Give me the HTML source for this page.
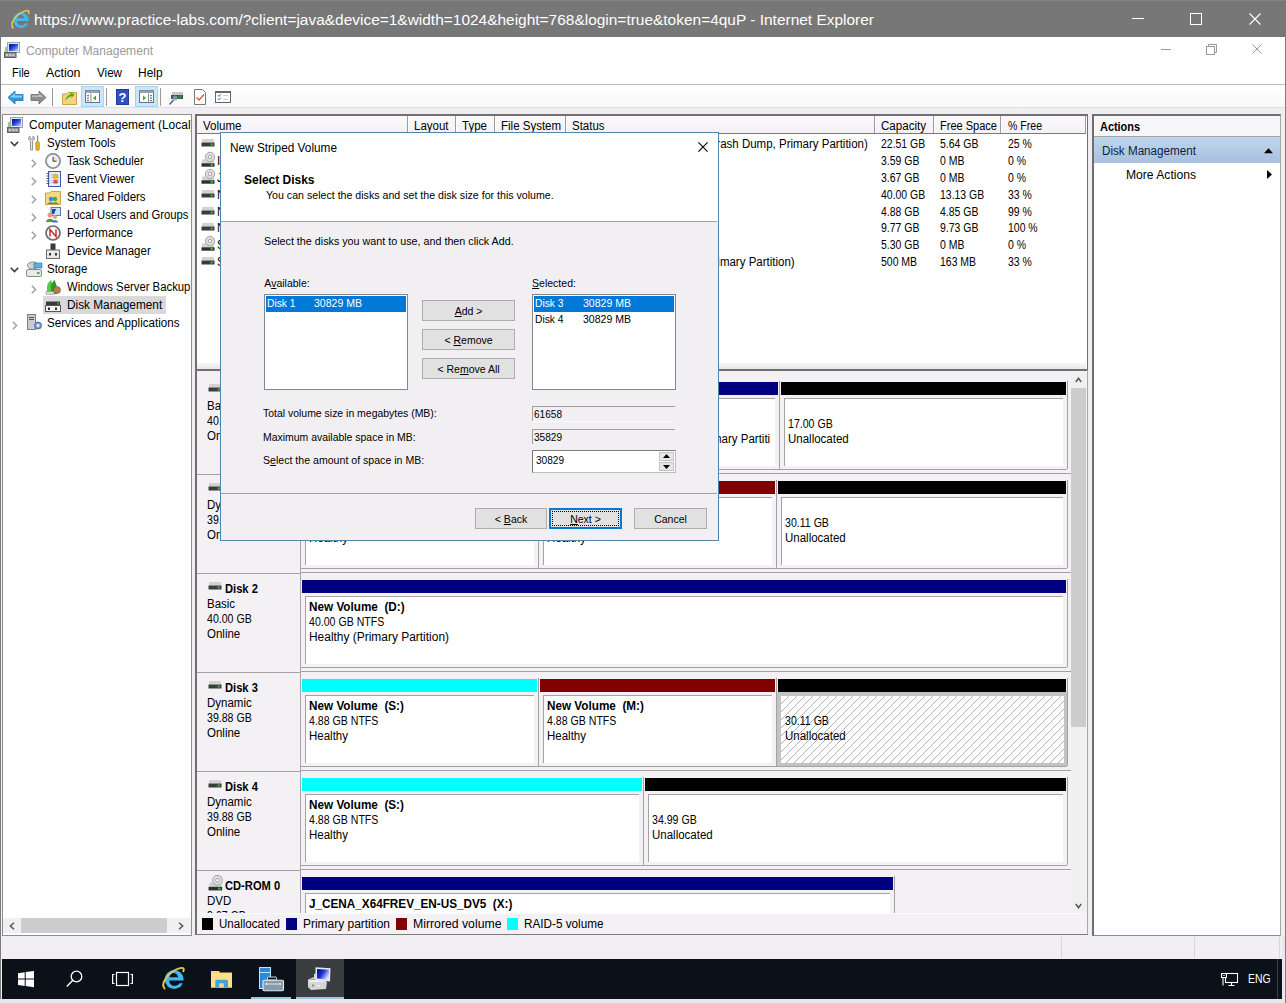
<!DOCTYPE html>
<html><head><meta charset="utf-8">
<style>
*{box-sizing:border-box}
html,body{margin:0;padding:0}
body{width:1286px;height:1003px;overflow:hidden;position:relative;background:#f0eef2;font-family:"Liberation Sans",sans-serif;color:#000}
.a{position:absolute}
.t{position:absolute;white-space:pre;line-height:1;font-size:11.5px;transform-origin:0 0}
svg{position:absolute;overflow:visible}
.u{text-decoration:underline}
</style></head><body>

<div class="a" style="left:0px;top:0px;width:1286px;height:1003px;background:#f1eef2;"></div>
<div class="a" style="left:0px;top:0px;width:1px;height:1003px;background:#7d7d7d;"></div>
<div class="a" style="left:0px;top:0px;width:1286px;height:37px;background:#777777;"></div>
<div class="a" style="left:0px;top:0px;width:1286px;height:1px;background:#858585;"></div>
<svg style="left:10px;top:9px" width="20" height="20" viewBox="0 0 20 20"><g transform="scale(0.8333333333333334)">
<circle cx="13.2" cy="13.5" r="9.4" fill="#42b6ee"/>
<path d="M8.4 11.2 C9 8.4 11 7 12.8 7 C14.6 7 16.6 8.4 17.1 11.2 Z" fill="#767676"/>
<path d="M8.1 14.4 H24 V17.2 H18.6 C17.4 19.2 15.2 19.7 13 19.7 C10.4 19.7 8.4 17.6 8.1 14.4 Z" fill="#767676"/>
<path d="M3.6 22.6 C-0.5 18.5 6 6.5 17.5 2.6 C21.5 1.2 23.8 1.8 22.3 5.3" fill="none" stroke="#e9c54a" stroke-width="1.9" stroke-linecap="round"/>
</g></svg>
<div class="t " style="left:34px;top:12px;font-size:15.4px;color:#fff;transform:scaleX(1.0042);">https://www.practice-labs.com/?client=java&amp;device=1&amp;width=1024&amp;height=768&amp;login=true&amp;token=4quP - Internet Explorer</div>
<div class="a" style="left:1132px;top:18px;width:12px;height:1px;background:#fff;"></div>
<div class="a" style="left:1190px;top:13px;width:12px;height:12px;background:transparent;border:1px solid #fff"></div>
<svg style="left:1249px;top:13px" width="12" height="12" viewBox="0 0 12 12"><path d="M0.5 0.5 L11.5 11.5 M11.5 0.5 L0.5 11.5" stroke="#fff" stroke-width="1.1"/></svg>
<div class="a" style="left:1px;top:37px;width:1284px;height:47px;background:#fff;"></div>
<svg style="left:4px;top:42px" width="16" height="16" viewBox="0 0 16 16"><defs><linearGradient id="scr" x1="0" y1="0" x2="1" y2="1"><stop offset="0" stop-color="#00107a"/><stop offset="0.45" stop-color="#2040d8"/><stop offset="1" stop-color="#c8d4ff"/></linearGradient></defs>
<rect x="3.5" y="0.5" width="12" height="10" fill="#dfe6f2" stroke="#9aa4b4" stroke-width="1"/>
<rect x="5" y="2" width="9" height="7" fill="url(#scr)"/>
<rect x="0.5" y="10.5" width="11.5" height="5" fill="#8c9298" stroke="#5d6268" stroke-width="1"/>
<rect x="2" y="12.3" width="2" height="1.5" fill="#e6e6e6"/><rect x="5.2" y="12.3" width="2" height="1.5" fill="#e6e6e6"/><rect x="8.4" y="12.3" width="2" height="1.5" fill="#e6e6e6"/>
<rect x="0.8" y="5" width="2.5" height="5" fill="#a8c090"/></svg>
<div class="t " style="left:25.5px;top:45px;font-size:12px;color:#9a9a9a;transform:scaleX(1.0073);">Computer Management</div>
<div class="a" style="left:1161px;top:49px;width:10px;height:1px;background:#9a9a9a;"></div>
<svg style="left:1206px;top:44px" width="11" height="11" viewBox="0 0 11 11"><rect x="0.5" y="2.5" width="8" height="8" fill="none" stroke="#9a9a9a"/><path d="M2.5 2.5 V0.5 H10.5 V8.5 H8.5" fill="none" stroke="#9a9a9a"/></svg>
<svg style="left:1252px;top:44px" width="10" height="10" viewBox="0 0 10 10"><path d="M0.5 0.5 L9.5 9.5 M9.5 0.5 L0.5 9.5" stroke="#9a9a9a" stroke-width="1"/></svg>
<div class="t " style="left:12.3px;top:67px;font-size:12px;transform:scaleX(0.9150);">File</div>
<div class="t " style="left:46px;top:67px;font-size:12px;transform:scaleX(1.0342);">Action</div>
<div class="t " style="left:97px;top:67px;font-size:12px;transform:scaleX(0.9691);">View</div>
<div class="t " style="left:138px;top:67px;font-size:12px;transform:scaleX(0.9965);">Help</div>
<div class="a" style="left:1px;top:84px;width:1284px;height:1px;background:#bdbdbd;"></div>
<div class="a" style="left:1px;top:85px;width:1284px;height:22px;background:linear-gradient(#ffffff,#f8f8f9);"></div>
<div class="a" style="left:1px;top:107px;width:1284px;height:1px;background:#e2e0e3;"></div>
<svg style="left:7px;top:90px" width="17" height="15" viewBox="0 0 17 15"><path d="M1 7.5 L8 1 L8 4.5 L16 4.5 L16 10.5 L8 10.5 L8 14 Z" fill="#2a9be0" stroke="#1d6fb0" stroke-width="0.8"/><path d="M3 7.5 L8 3 L8 5.5 L15 5.5 L15 7.5Z" fill="#7fd0f8"/></svg>
<svg style="left:30px;top:90px" width="17" height="15" viewBox="0 0 17 15"><path d="M16 7.5 L9 1 L9 4.5 L1 4.5 L1 10.5 L9 10.5 L9 14 Z" fill="#8e8e8e" stroke="#6a6a6a" stroke-width="0.8"/><path d="M2 5.5 L9 5.5 L9 3 L13 7 L2 7Z" fill="#bdbdbd"/></svg>
<div class="a" style="left:52px;top:88px;width:1px;height:18px;background:#9a9a9a;"></div>
<svg style="left:62px;top:89px" width="15" height="16" viewBox="0 0 15 16"><path d="M0.5 5 L5 5 L6 3.5 L14.5 3.5 L14.5 15.5 L0.5 15.5Z" fill="#f4d57c" stroke="#c9a444"/><path d="M3 12 C4 8 6 6 9 5 L8 3 L12.5 5.5 L9.5 9 L9.5 7 C7 8 5 9.5 3 12Z" fill="#4aa82a"/></svg>
<div class="a" style="left:81px;top:86px;width:23px;height:21px;background:#cde6f7;border:1px solid #a8d2f0"></div>
<svg style="left:85px;top:90px" width="15" height="13" viewBox="0 0 15 13"><rect x="0.5" y="0.5" width="14" height="12" fill="#fff" stroke="#6b7480"/><rect x="0.5" y="0.5" width="14" height="2.5" fill="#9aa3ad"/><rect x="2" y="5" width="2" height="1.2" fill="#6b7480"/><rect x="2" y="7.5" width="2" height="1.2" fill="#6b7480"/><rect x="2" y="10" width="2" height="1.2" fill="#6b7480"/><rect x="5.5" y="3.5" width="0.8" height="9" fill="#6b7480"/><path d="M11 5.5 L8 8 L11 10.5Z" fill="#3aa83a"/></svg>
<div class="a" style="left:106px;top:88px;width:1px;height:18px;background:#9a9a9a;"></div>
<svg style="left:116px;top:89px" width="13" height="16" viewBox="0 0 13 16"><rect x="0" y="0" width="13" height="16" fill="#1e3f9a"/><rect x="1" y="1" width="11" height="14" fill="#2c52c0"/><text x="6.5" y="13" font-family="Liberation Sans" font-weight="bold" font-size="13" fill="#fff" text-anchor="middle">?</text></svg>
<div class="a" style="left:135px;top:86px;width:23px;height:21px;background:#cde6f7;border:1px solid #a8d2f0"></div>
<svg style="left:139px;top:90px" width="15" height="13" viewBox="0 0 15 13"><rect x="0.5" y="0.5" width="14" height="12" fill="#fff" stroke="#6b7480"/><rect x="0.5" y="0.5" width="14" height="2.5" fill="#9aa3ad"/><rect x="11" y="5" width="2" height="1.2" fill="#6b7480"/><rect x="11" y="7.5" width="2" height="1.2" fill="#6b7480"/><rect x="11" y="10" width="2" height="1.2" fill="#6b7480"/><rect x="9" y="3.5" width="0.8" height="9" fill="#6b7480"/><path d="M4 5.5 L7 8 L4 10.5Z" fill="#3aa83a"/></svg>
<div class="a" style="left:160px;top:88px;width:1px;height:18px;background:#9a9a9a;"></div>
<svg style="left:169px;top:91px" width="15" height="14" viewBox="0 0 15 14"><rect x="3" y="1" width="11" height="3" fill="#c8c8c8"/><rect x="2" y="4" width="12" height="4" fill="#3a4a58"/><rect x="9" y="4.5" width="4" height="3" fill="#2a8a3a"/><circle cx="6" cy="7" r="2.5" fill="#8aa0c0" opacity="0.8"/><path d="M4.5 9 L0.5 13.5" stroke="#555" stroke-width="1.2"/></svg>
<svg style="left:194px;top:89px" width="12" height="16" viewBox="0 0 12 16"><path d="M0.5 0.5 L8.5 0.5 L11.5 3.5 L11.5 15.5 L0.5 15.5Z" fill="#fff" stroke="#777"/><path d="M2.5 8.5 L5 11 L10 5.5" fill="none" stroke="#e05a30" stroke-width="1.4"/></svg>
<svg style="left:215px;top:91px" width="16" height="12" viewBox="0 0 16 12"><rect x="0.5" y="0.5" width="15" height="11" fill="#fff" stroke="#666"/><rect x="0.5" y="0.5" width="15" height="1.5" fill="#666"/><path d="M3 4 L4 5.5 L6 3 M3 7.5 L4 9 L6 6.5" fill="none" stroke="#3a8ad0" stroke-width="1"/><rect x="8" y="4.3" width="5" height="0.8" fill="#bbb"/><rect x="8" y="7.8" width="5" height="0.8" fill="#bbb"/></svg>
<div class="a" style="left:2px;top:114px;width:190px;height:822px;background:#fff;border:1px solid #8e8e8e"></div>
<div class="a" style="left:195px;top:114px;width:893px;height:257px;background:#fff;border:2px solid #6f6f6f;border-right-width:1px;border-bottom:0"></div>
<div class="a" style="left:195px;top:369px;width:893px;height:566px;background:#f3f1f4;border:2px solid #6f6f6f;border-right:1px solid #a8a8a8;border-bottom:1px solid #7c7c7c"></div>
<div class="a" style="left:1092px;top:114px;width:189px;height:822px;background:#fff;border:2px solid #6f6f6f;border-right:1px solid #a8a8a8;border-bottom:1px solid #8e8e8e"></div>
<svg style="left:7px;top:117px" width="16" height="16" viewBox="0 0 16 16"><defs><linearGradient id="scr" x1="0" y1="0" x2="1" y2="1"><stop offset="0" stop-color="#00107a"/><stop offset="0.45" stop-color="#2040d8"/><stop offset="1" stop-color="#c8d4ff"/></linearGradient></defs>
<rect x="3.5" y="0.5" width="12" height="10" fill="#dfe6f2" stroke="#9aa4b4" stroke-width="1"/>
<rect x="5" y="2" width="9" height="7" fill="url(#scr)"/>
<rect x="0.5" y="10.5" width="11.5" height="5" fill="#8c9298" stroke="#5d6268" stroke-width="1"/>
<rect x="2" y="12.3" width="2" height="1.5" fill="#e6e6e6"/><rect x="5.2" y="12.3" width="2" height="1.5" fill="#e6e6e6"/><rect x="8.4" y="12.3" width="2" height="1.5" fill="#e6e6e6"/>
<rect x="0.8" y="5" width="2.5" height="5" fill="#a8c090"/></svg>
<div class="a" style="left:0;top:115px;width:190.5px;height:20px;overflow:hidden">
<div class="t " style="left:28.6px;top:4px;font-size:12px;transform:scaleX(0.9967);">Computer Management (Local)</div>
</div>
<svg style="left:10px;top:141px" width="9" height="6" viewBox="0 0 9 6"><path d="M0.8 0.8 L4.5 4.6 L8.2 0.8" fill="none" stroke="#3c3c3c" stroke-width="1.6"/></svg>
<svg style="left:28px;top:135px" width="13" height="16" viewBox="0 0 13 16"><path d="M2 1 C0 2 0 5 2.5 6 L2.5 15 L4.5 15 L4.5 6 C7 5 7 2 5 1 L5 4 L2 4Z" fill="#e8e8e8" stroke="#8a8a8a" stroke-width="0.9"/><rect x="9" y="0.5" width="1.2" height="6" fill="#888"/><rect x="7.8" y="6.5" width="3.6" height="9" rx="1.5" fill="#e8b020" stroke="#b88000" stroke-width="0.6"/></svg>
<div class="t " style="left:47.4px;top:137px;font-size:12px;transform:scaleX(0.9615);">System Tools</div>
<svg style="left:31px;top:159px" width="6" height="9" viewBox="0 0 6 9"><path d="M0.8 0.8 L4.6 4.5 L0.8 8.2" fill="none" stroke="#a0a0a0" stroke-width="1.5"/></svg>
<div class="t " style="left:66.5px;top:155px;font-size:12px;transform:scaleX(0.9361);">Task Scheduler</div>
<svg style="left:31px;top:177px" width="6" height="9" viewBox="0 0 6 9"><path d="M0.8 0.8 L4.6 4.5 L0.8 8.2" fill="none" stroke="#a0a0a0" stroke-width="1.5"/></svg>
<div class="t " style="left:66.5px;top:173px;font-size:12px;transform:scaleX(0.9583);">Event Viewer</div>
<svg style="left:31px;top:195px" width="6" height="9" viewBox="0 0 6 9"><path d="M0.8 0.8 L4.6 4.5 L0.8 8.2" fill="none" stroke="#a0a0a0" stroke-width="1.5"/></svg>
<div class="t " style="left:66.5px;top:191px;font-size:12px;transform:scaleX(0.9583);">Shared Folders</div>
<svg style="left:31px;top:213px" width="6" height="9" viewBox="0 0 6 9"><path d="M0.8 0.8 L4.6 4.5 L0.8 8.2" fill="none" stroke="#a0a0a0" stroke-width="1.5"/></svg>
<div class="t " style="left:66.5px;top:209px;font-size:12px;transform:scaleX(0.9389);">Local Users and Groups</div>
<svg style="left:31px;top:231px" width="6" height="9" viewBox="0 0 6 9"><path d="M0.8 0.8 L4.6 4.5 L0.8 8.2" fill="none" stroke="#a0a0a0" stroke-width="1.5"/></svg>
<div class="t " style="left:66.5px;top:227px;font-size:12px;transform:scaleX(0.9583);">Performance</div>
<div class="t " style="left:66.5px;top:245px;font-size:12px;transform:scaleX(0.9584);">Device Manager</div>
<svg style="left:45px;top:153px" width="16" height="16" viewBox="0 0 16 16"><circle cx="8" cy="8" r="7.2" fill="#e2e8f0" stroke="#7e8896" stroke-width="1.5"/><circle cx="8" cy="8" r="5.3" fill="#fbfbfd"/><path d="M8 8 L12.5 8 A4.5 4.5 0 0 0 8 3.5Z" fill="#f3dfb0"/><path d="M8 3.8 L8 8.2 L11.5 8.2" fill="none" stroke="#3a3a3a" stroke-width="1"/></svg>
<svg style="left:46px;top:171px" width="15" height="16" viewBox="0 0 15 16"><rect x="2.5" y="0.5" width="12" height="15" fill="#e8eef8" stroke="#3a5aa8"/><path d="M0.5 2.5h3M0.5 5h3M0.5 7.5h3M0.5 10h3M0.5 12.5h3" stroke="#3a5aa8" stroke-width="1"/><path d="M5 4h8M5 6.5h8M5 9h8M5 11.5h8" stroke="#9aaccc" stroke-width="0.7"/><circle cx="9.5" cy="5.5" r="2.3" fill="#f0c020" stroke="#b08a10" stroke-width="0.5"/><rect x="7.5" y="9" width="4" height="3.5" fill="#e04848"/></svg>
<svg style="left:45px;top:190px" width="16" height="15" viewBox="0 0 16 15"><path d="M0.5 3 L5 3 L6 1.5 L15.5 1.5 L15.5 14.5 L0.5 14.5Z" fill="#f4d88a" stroke="#c9a444"/><circle cx="6" cy="9" r="2.2" fill="#3a8ad0"/><circle cx="10" cy="9" r="2.2" fill="#4aa84a"/><path d="M2.5 14 C3 11.5 9 11.5 9.5 14Z" fill="#3a8ad0"/><path d="M7 14 C7.5 11.5 13 11.5 13.5 14Z" fill="#4aa84a"/></svg>
<svg style="left:45px;top:207px" width="16" height="16" viewBox="0 0 16 16"><rect x="6" y="0.5" width="9.5" height="8" fill="#cfe0f5" stroke="#5a7ab0"/><path d="M7 2 L11 2 L9 7 L7 7Z" fill="#1d3fb8"/><circle cx="5" cy="8" r="2.5" fill="#e0a070"/><path d="M1 15 C1 10.5 9 10.5 9 15Z" fill="#4a9a4a"/><circle cx="10" cy="10" r="2" fill="#e0a070"/><path d="M7 15.5 C7 12 13 12 13 15.5Z" fill="#3a7ad0"/></svg>
<svg style="left:45px;top:225px" width="16" height="16" viewBox="0 0 16 16"><circle cx="8" cy="8" r="7" fill="#f4f4f4" stroke="#6e6e6e" stroke-width="1.7"/><circle cx="8" cy="8" r="5" fill="#fff"/><path d="M5 11.5 L5 4.5 L11 11.5 L11 4.5" fill="none" stroke="#d02828" stroke-width="1.5"/></svg>
<svg style="left:46px;top:243px" width="14" height="16" viewBox="0 0 14 16"><rect x="4.5" y="0.5" width="5" height="6.5" fill="#3a3a3a"/><rect x="0.5" y="7" width="13" height="8.5" fill="#e8e8e8" stroke="#6a6a6a"/><rect x="3" y="10" width="2" height="2.5" fill="#333"/><rect x="9" y="10" width="2" height="2.5" fill="#333"/></svg>
<svg style="left:10px;top:267px" width="9" height="6" viewBox="0 0 9 6"><path d="M0.8 0.8 L4.5 4.6 L8.2 0.8" fill="none" stroke="#3c3c3c" stroke-width="1.6"/></svg>
<svg style="left:26px;top:261px" width="16" height="16" viewBox="0 0 16 16"><ellipse cx="7" cy="4.5" rx="5.5" ry="3.5" fill="#d8d8d8" stroke="#8a8a8a"/><circle cx="7" cy="4.5" r="1.2" fill="#fff" stroke="#888" stroke-width="0.5"/><rect x="8" y="2" width="8" height="5" fill="#5ab0e0" stroke="#2a7ab0" stroke-width="0.6"/><rect x="0.5" y="8.5" width="15" height="7" rx="1.5" fill="#e8e8e8" stroke="#8a8a8a"/><rect x="11" y="11" width="2.5" height="2" fill="#4aa84a"/></svg>
<div class="t " style="left:47.4px;top:263px;font-size:12px;transform:scaleX(0.9583);">Storage</div>
<svg style="left:31px;top:285px" width="6" height="9" viewBox="0 0 6 9"><path d="M0.8 0.8 L4.6 4.5 L0.8 8.2" fill="none" stroke="#a0a0a0" stroke-width="1.5"/></svg>
<svg style="left:45px;top:279px" width="16" height="16" viewBox="0 0 16 16"><path d="M2 15 L2 9 C2 4 5 2 6 1 C6.5 4 9 6 9 9 L9 15Z" fill="#5ac83a"/><path d="M6 15 L6 8 C6 5 8 2 10 1 C10 4 12 6 12 9 L12 15Z" fill="#2a9a2a"/><circle cx="12" cy="11" r="3.5" fill="#b08050" stroke="#7a5030" stroke-width="0.6"/><rect x="1" y="12.5" width="8" height="3" fill="#d8d8d8" stroke="#888" stroke-width="0.5"/></svg>
<div class="a" style="left:0;top:280px;width:190.5px;height:20px;overflow:hidden">
<div class="t " style="left:66.5px;top:1px;font-size:12px;transform:scaleX(0.9440);">Windows Server Backup</div>
</div>
<div class="a" style="left:43px;top:296px;width:123px;height:18px;background:#d9d9d9;"></div>
<svg style="left:45px;top:301px" width="16" height="11" viewBox="0 0 16 11"><rect x="1" y="0.5" width="14" height="4" fill="#3a3a3a"/><rect x="12" y="1.5" width="2" height="2" fill="#2ea02e"/><rect x="0.5" y="4.5" width="15" height="6" fill="#f4f4f4" stroke="#555"/><rect x="3" y="6.5" width="2" height="2.5" fill="#333"/><rect x="10" y="6.5" width="2" height="2.5" fill="#333"/></svg>
<div class="t " style="left:66.5px;top:299px;font-size:12px;transform:scaleX(0.9843);">Disk Management</div>
<svg style="left:12px;top:321px" width="6" height="9" viewBox="0 0 6 9"><path d="M0.8 0.8 L4.6 4.5 L0.8 8.2" fill="none" stroke="#a0a0a0" stroke-width="1.5"/></svg>
<svg style="left:27px;top:314px" width="15" height="16" viewBox="0 0 15 16"><rect x="0.5" y="0.5" width="8" height="15" fill="#c8ccd2" stroke="#7a7e86"/><rect x="2" y="3" width="5" height="1" fill="#555"/><rect x="2" y="5" width="5" height="1" fill="#555"/><circle cx="11" cy="11.5" r="3.5" fill="#7aa0d0" stroke="#4a70a0"/><circle cx="11" cy="11.5" r="1.3" fill="#fff"/></svg>
<div class="t " style="left:47.4px;top:317px;font-size:12px;transform:scaleX(0.9697);">Services and Applications</div>
<div class="a" style="left:3px;top:918px;width:188px;height:15px;background:#f0f0f0;"></div>
<div class="a" style="left:21px;top:918px;width:146px;height:15px;background:#cdcdcd;"></div>
<svg style="left:9px;top:922px" width="6" height="8" viewBox="0 0 6 8"><path d="M5 0.8 L1.3 4 L5 7.2" fill="none" stroke="#555" stroke-width="1.5"/></svg>
<svg style="left:178px;top:922px" width="6" height="8" viewBox="0 0 6 8"><path d="M1 0.8 L4.7 4 L1 7.2" fill="none" stroke="#555" stroke-width="1.5"/></svg>
<div class="a" style="left:197px;top:116px;width:889px;height:18px;background:linear-gradient(#fbfafb,#f3f1f4);"></div>
<div class="a" style="left:197px;top:133px;width:889px;height:1px;background:#7a7a7a;"></div>
<div class="a" style="left:407px;top:116px;width:1px;height:17px;background:#9c9c9c;"></div>
<div class="a" style="left:408px;top:116px;width:1px;height:17px;background:#fff;"></div>
<div class="a" style="left:455px;top:116px;width:1px;height:17px;background:#9c9c9c;"></div>
<div class="a" style="left:456px;top:116px;width:1px;height:17px;background:#fff;"></div>
<div class="a" style="left:494px;top:116px;width:1px;height:17px;background:#9c9c9c;"></div>
<div class="a" style="left:495px;top:116px;width:1px;height:17px;background:#fff;"></div>
<div class="a" style="left:565px;top:116px;width:1px;height:17px;background:#9c9c9c;"></div>
<div class="a" style="left:566px;top:116px;width:1px;height:17px;background:#fff;"></div>
<div class="a" style="left:874px;top:116px;width:1px;height:17px;background:#9c9c9c;"></div>
<div class="a" style="left:875px;top:116px;width:1px;height:17px;background:#fff;"></div>
<div class="a" style="left:933px;top:116px;width:1px;height:17px;background:#9c9c9c;"></div>
<div class="a" style="left:934px;top:116px;width:1px;height:17px;background:#fff;"></div>
<div class="a" style="left:1000px;top:116px;width:1px;height:17px;background:#9c9c9c;"></div>
<div class="a" style="left:1001px;top:116px;width:1px;height:17px;background:#fff;"></div>
<div class="a" style="left:1085px;top:116px;width:1px;height:17px;background:#9c9c9c;"></div>
<div class="t " style="left:203px;top:120px;font-size:12px;transform:scaleX(0.9582);">Volume</div>
<div class="t " style="left:414.3px;top:120px;font-size:12px;transform:scaleX(0.9583);">Layout</div>
<div class="t " style="left:462.3px;top:120px;font-size:12px;transform:scaleX(0.9584);">Type</div>
<div class="t " style="left:501.2px;top:120px;font-size:12px;transform:scaleX(0.9582);">File System</div>
<div class="t " style="left:572.2px;top:120px;font-size:12px;transform:scaleX(0.9580);">Status</div>
<div class="t " style="left:881.3px;top:120px;font-size:12px;transform:scaleX(0.9639);">Capacity</div>
<div class="t " style="left:939.5px;top:120px;font-size:12px;transform:scaleX(0.9187);">Free Space</div>
<div class="t " style="left:1008px;top:120px;font-size:12px;transform:scaleX(0.8788);">% Free</div>
<svg style="left:201px;top:139px" width="14" height="8" viewBox="0 0 14 8"><rect x="1" y="0" width="12" height="3.5" fill="#d2d2d2"/><rect x="0.5" y="3.5" width="13" height="4" fill="#3c3c3c"/><rect x="9.5" y="4.5" width="2.5" height="2" fill="#30b030"/></svg>
<div class="t " style="left:881.3px;top:138px;font-size:12px;transform:scaleX(0.8721);">22.51 GB</div>
<div class="t " style="left:939.5px;top:138px;font-size:12px;transform:scaleX(0.8720);">5.64 GB</div>
<div class="t " style="left:1008px;top:138px;font-size:12px;transform:scaleX(0.8718);">25 %</div>
<div class="t " style="left:577.195546875px;top:138px;font-size:12px;transform:scaleX(0.9583);">Healthy (Boot, Page File, Crash Dump, Primary Partition)</div>
<svg style="left:201px;top:152px" width="14" height="15" viewBox="0 0 14 15"><g transform="scale(1.0)"><rect x="1" y="7.5" width="12" height="4" fill="#d2d2d2"/><circle cx="9" cy="5" r="4.7" fill="#dcdcdc" stroke="#a0a0a0" stroke-width="0.9"/><circle cx="9" cy="5" r="1.7" fill="#fff" stroke="#8a8a8a" stroke-width="0.7"/><rect x="0.5" y="11.3" width="13" height="3.4" fill="#2e2e2e"/><rect x="9.5" y="12" width="2.5" height="2" fill="#30b030"/></g></svg>
<div class="t " style="left:217px;top:155px;font-size:12px;transform:scaleX(0.9583);">IRM_SSS_X64FREV</div>
<div class="t " style="left:881.3px;top:155px;font-size:12px;transform:scaleX(0.8720);">3.59 GB</div>
<div class="t " style="left:939.5px;top:155px;font-size:12px;transform:scaleX(0.8719);">0 MB</div>
<div class="t " style="left:1008px;top:155px;font-size:12px;transform:scaleX(0.8717);">0 %</div>
<svg style="left:201px;top:169px" width="14" height="15" viewBox="0 0 14 15"><g transform="scale(1.0)"><rect x="1" y="7.5" width="12" height="4" fill="#d2d2d2"/><circle cx="9" cy="5" r="4.7" fill="#dcdcdc" stroke="#a0a0a0" stroke-width="0.9"/><circle cx="9" cy="5" r="1.7" fill="#fff" stroke="#8a8a8a" stroke-width="0.7"/><rect x="0.5" y="11.3" width="13" height="3.4" fill="#2e2e2e"/><rect x="9.5" y="12" width="2.5" height="2" fill="#30b030"/></g></svg>
<div class="t " style="left:217px;top:172px;font-size:12px;transform:scaleX(0.9583);">J_CENA_X64FREV</div>
<div class="t " style="left:881.3px;top:172px;font-size:12px;transform:scaleX(0.8720);">3.67 GB</div>
<div class="t " style="left:939.5px;top:172px;font-size:12px;transform:scaleX(0.8719);">0 MB</div>
<div class="t " style="left:1008px;top:172px;font-size:12px;transform:scaleX(0.8717);">0 %</div>
<svg style="left:201px;top:190px" width="14" height="8" viewBox="0 0 14 8"><rect x="1" y="0" width="12" height="3.5" fill="#d2d2d2"/><rect x="0.5" y="3.5" width="13" height="4" fill="#3c3c3c"/><rect x="9.5" y="4.5" width="2.5" height="2" fill="#30b030"/></svg>
<div class="t " style="left:217px;top:189px;font-size:12px;transform:scaleX(0.9582);">New Volume (D:)</div>
<div class="t " style="left:881.3px;top:189px;font-size:12px;transform:scaleX(0.8721);">40.00 GB</div>
<div class="t " style="left:939.5px;top:189px;font-size:12px;transform:scaleX(0.8721);">13.13 GB</div>
<div class="t " style="left:1008px;top:189px;font-size:12px;transform:scaleX(0.8718);">33 %</div>
<svg style="left:201px;top:207px" width="14" height="8" viewBox="0 0 14 8"><rect x="1" y="0" width="12" height="3.5" fill="#d2d2d2"/><rect x="0.5" y="3.5" width="13" height="4" fill="#3c3c3c"/><rect x="9.5" y="4.5" width="2.5" height="2" fill="#30b030"/></svg>
<div class="t " style="left:217px;top:206px;font-size:12px;transform:scaleX(0.9583);">New Volume (M:)</div>
<div class="t " style="left:881.3px;top:206px;font-size:12px;transform:scaleX(0.8720);">4.88 GB</div>
<div class="t " style="left:939.5px;top:206px;font-size:12px;transform:scaleX(0.8720);">4.85 GB</div>
<div class="t " style="left:1008px;top:206px;font-size:12px;transform:scaleX(0.8718);">99 %</div>
<svg style="left:201px;top:223px" width="14" height="8" viewBox="0 0 14 8"><rect x="1" y="0" width="12" height="3.5" fill="#d2d2d2"/><rect x="0.5" y="3.5" width="13" height="4" fill="#3c3c3c"/><rect x="9.5" y="4.5" width="2.5" height="2" fill="#30b030"/></svg>
<div class="t " style="left:217px;top:222px;font-size:12px;transform:scaleX(0.9583);">New Volume (S:)</div>
<div class="t " style="left:881.3px;top:222px;font-size:12px;transform:scaleX(0.8720);">9.77 GB</div>
<div class="t " style="left:939.5px;top:222px;font-size:12px;transform:scaleX(0.8720);">9.73 GB</div>
<div class="t " style="left:1008px;top:222px;font-size:12px;transform:scaleX(0.8719);">100 %</div>
<svg style="left:201px;top:236px" width="14" height="15" viewBox="0 0 14 15"><g transform="scale(1.0)"><rect x="1" y="7.5" width="12" height="4" fill="#d2d2d2"/><circle cx="9" cy="5" r="4.7" fill="#dcdcdc" stroke="#a0a0a0" stroke-width="0.9"/><circle cx="9" cy="5" r="1.7" fill="#fff" stroke="#8a8a8a" stroke-width="0.7"/><rect x="0.5" y="11.3" width="13" height="3.4" fill="#2e2e2e"/><rect x="9.5" y="12" width="2.5" height="2" fill="#30b030"/></g></svg>
<div class="t " style="left:217px;top:239px;font-size:12px;transform:scaleX(0.9583);">SSS_X64FREV</div>
<div class="t " style="left:881.3px;top:239px;font-size:12px;transform:scaleX(0.8720);">5.30 GB</div>
<div class="t " style="left:939.5px;top:239px;font-size:12px;transform:scaleX(0.8719);">0 MB</div>
<div class="t " style="left:1008px;top:239px;font-size:12px;transform:scaleX(0.8717);">0 %</div>
<svg style="left:201px;top:257px" width="14" height="8" viewBox="0 0 14 8"><rect x="1" y="0" width="12" height="3.5" fill="#d2d2d2"/><rect x="0.5" y="3.5" width="13" height="4" fill="#3c3c3c"/><rect x="9.5" y="4.5" width="2.5" height="2" fill="#30b030"/></svg>
<div class="t " style="left:217px;top:256px;font-size:12px;transform:scaleX(0.9583);">System Reserved</div>
<div class="t " style="left:881.3px;top:256px;font-size:12px;transform:scaleX(0.8720);">500 MB</div>
<div class="t " style="left:939.5px;top:256px;font-size:12px;transform:scaleX(0.8720);">163 MB</div>
<div class="t " style="left:1008px;top:256px;font-size:12px;transform:scaleX(0.8718);">33 %</div>
<div class="t " style="left:578.352578125px;top:256px;font-size:12px;transform:scaleX(0.9584);">Healthy (System, Active, Primary Partition)</div>
<div class="a" style="left:197px;top:363px;width:889px;height:6px;background:linear-gradient(#f6f6f6,#e8e8e8);"></div>
<div class="a" style="left:1071px;top:371px;width:15px;height:543px;background:#f0f0f0;"></div>
<div class="a" style="left:1071px;top:388px;width:15px;height:339px;background:#cdcdcd;"></div>
<svg style="left:1075px;top:377px" width="7" height="6" viewBox="0 0 7 6"><path d="M0.8 5 L3.5 1.3 L6.2 5" fill="none" stroke="#555" stroke-width="1.5"/></svg>
<svg style="left:1075px;top:903px" width="7" height="6" viewBox="0 0 7 6"><path d="M0.8 1 L3.5 4.7 L6.2 1" fill="none" stroke="#555" stroke-width="1.5"/></svg>
<div class="a" style="left:300px;top:371px;width:1px;height:543px;background:#a8a6aa;"></div>
<div class="a" style="left:0;top:0;width:1286px;height:1003px;clip-path:inset(371px 215px 90px 197px)">
<svg style="left:208px;top:384px" width="14" height="8" viewBox="0 0 14 8"><rect x="1" y="0" width="12" height="3.5" fill="#d2d2d2"/><rect x="0.5" y="3.5" width="13" height="4" fill="#3c3c3c"/><rect x="9.5" y="4.5" width="2.5" height="2" fill="#30b030"/></svg>
<div class="t " style="left:224.7px;top:385px;font-size:12px;font-weight:bold;transform:scaleX(0.9295);">Disk 0</div>
<div class="t " style="left:206.5px;top:400px;font-size:12px;transform:scaleX(0.9584);">Basic</div>
<div class="t " style="left:206.5px;top:415px;font-size:12px;transform:scaleX(0.8816);">40.00 GB</div>
<div class="t " style="left:206.5px;top:430px;font-size:12px;transform:scaleX(0.9584);">Online</div>
<div class="a" style="left:302px;top:382px;width:476px;height:13px;background:#000080;"></div>
<div class="a" style="left:305px;top:398px;width:470px;height:68px;background:#fff;border-top:1px solid #a3a1a5;border-left:1px solid #a3a1a5"></div>
<div class="t " style="left:496.3175390625px;top:433px;font-size:12px;transform:scaleX(0.9583);">Healthy (Boot, Page File, Crash Dump, Primary Partiti</div>
<div class="a" style="left:779px;top:381px;width:1px;height:88px;background:#a3a1a5;"></div>
<div class="a" style="left:781px;top:382px;width:285px;height:13px;background:#000000;"></div>
<div class="a" style="left:784px;top:398px;width:279px;height:68px;background:#fff;border-top:1px solid #a3a1a5;border-left:1px solid #a3a1a5"></div>
<div class="t " style="left:788.3px;top:418px;font-size:12px;transform:scaleX(0.8816);">17.00 GB</div>
<div class="t " style="left:788.3px;top:433px;font-size:12px;transform:scaleX(0.9584);">Unallocated</div>
<div class="a" style="left:1067px;top:381px;width:1px;height:88px;background:#a3a1a5;"></div>
<div class="a" style="left:301px;top:469px;width:766px;height:1px;background:#a3a1a5;"></div>
<div class="a" style="left:197px;top:474px;width:103px;height:1px;background:#a3a1a5;"></div>
<div class="a" style="left:301px;top:473px;width:770px;height:1px;background:#a3a1a5;"></div>
<svg style="left:208px;top:483px" width="14" height="8" viewBox="0 0 14 8"><rect x="1" y="0" width="12" height="3.5" fill="#d2d2d2"/><rect x="0.5" y="3.5" width="13" height="4" fill="#3c3c3c"/><rect x="9.5" y="4.5" width="2.5" height="2" fill="#30b030"/></svg>
<div class="t " style="left:224.7px;top:484px;font-size:12px;font-weight:bold;transform:scaleX(0.9295);">Disk 1</div>
<div class="t " style="left:206.5px;top:499px;font-size:12px;transform:scaleX(0.9581);">Dynamic</div>
<div class="t " style="left:206.5px;top:514px;font-size:12px;transform:scaleX(0.8816);">39.88 GB</div>
<div class="t " style="left:206.5px;top:529px;font-size:12px;transform:scaleX(0.9584);">Online</div>
<div class="a" style="left:302px;top:481px;width:235px;height:13px;background:#00ffff;"></div>
<div class="a" style="left:305px;top:497px;width:229px;height:68px;background:#fff;border-top:1px solid #a3a1a5;border-left:1px solid #a3a1a5"></div>
<div class="t " style="left:309.3px;top:502px;font-size:12px;font-weight:bold;transform:scaleX(0.9775);">New Volume  (S:)</div>
<div class="t " style="left:309.3px;top:517px;font-size:12px;transform:scaleX(0.8816);">4.88 GB NTFS</div>
<div class="t " style="left:309.3px;top:532px;font-size:12px;transform:scaleX(0.9584);">Healthy</div>
<div class="a" style="left:538px;top:480px;width:1px;height:88px;background:#a3a1a5;"></div>
<div class="a" style="left:540px;top:481px;width:235px;height:13px;background:#800000;"></div>
<div class="a" style="left:543px;top:497px;width:229px;height:68px;background:#fff;border-top:1px solid #a3a1a5;border-left:1px solid #a3a1a5"></div>
<div class="t " style="left:547.3px;top:502px;font-size:12px;font-weight:bold;transform:scaleX(0.9774);">New Volume  (M:)</div>
<div class="t " style="left:547.3px;top:517px;font-size:12px;transform:scaleX(0.8816);">4.88 GB NTFS</div>
<div class="t " style="left:547.3px;top:532px;font-size:12px;transform:scaleX(0.9584);">Healthy</div>
<div class="a" style="left:776px;top:480px;width:1px;height:88px;background:#a3a1a5;"></div>
<div class="a" style="left:778px;top:481px;width:288px;height:13px;background:#000000;"></div>
<div class="a" style="left:781px;top:497px;width:282px;height:68px;background:#fff;border-top:1px solid #a3a1a5;border-left:1px solid #a3a1a5"></div>
<div class="t " style="left:785.3px;top:517px;font-size:12px;transform:scaleX(0.8816);">30.11 GB</div>
<div class="t " style="left:785.3px;top:532px;font-size:12px;transform:scaleX(0.9584);">Unallocated</div>
<div class="a" style="left:1067px;top:480px;width:1px;height:88px;background:#a3a1a5;"></div>
<div class="a" style="left:301px;top:568px;width:766px;height:1px;background:#a3a1a5;"></div>
<div class="a" style="left:197px;top:573px;width:103px;height:1px;background:#a3a1a5;"></div>
<div class="a" style="left:301px;top:572px;width:770px;height:1px;background:#a3a1a5;"></div>
<svg style="left:208px;top:582px" width="14" height="8" viewBox="0 0 14 8"><rect x="1" y="0" width="12" height="3.5" fill="#d2d2d2"/><rect x="0.5" y="3.5" width="13" height="4" fill="#3c3c3c"/><rect x="9.5" y="4.5" width="2.5" height="2" fill="#30b030"/></svg>
<div class="t " style="left:224.7px;top:583px;font-size:12px;font-weight:bold;transform:scaleX(0.9295);">Disk 2</div>
<div class="t " style="left:206.5px;top:598px;font-size:12px;transform:scaleX(0.9584);">Basic</div>
<div class="t " style="left:206.5px;top:613px;font-size:12px;transform:scaleX(0.8816);">40.00 GB</div>
<div class="t " style="left:206.5px;top:628px;font-size:12px;transform:scaleX(0.9584);">Online</div>
<div class="a" style="left:302px;top:580px;width:764px;height:13px;background:#000080;"></div>
<div class="a" style="left:305px;top:596px;width:758px;height:68px;background:#fff;border-top:1px solid #a3a1a5;border-left:1px solid #a3a1a5"></div>
<div class="t " style="left:309.3px;top:601px;font-size:12px;font-weight:bold;transform:scaleX(0.9775);">New Volume  (D:)</div>
<div class="t " style="left:309.3px;top:616px;font-size:12px;transform:scaleX(0.8816);">40.00 GB NTFS</div>
<div class="t " style="left:309.3px;top:631px;font-size:12px;transform:scaleX(0.9950);">Healthy (Primary Partition)</div>
<div class="a" style="left:1067px;top:579px;width:1px;height:88px;background:#a3a1a5;"></div>
<div class="a" style="left:301px;top:667px;width:766px;height:1px;background:#a3a1a5;"></div>
<div class="a" style="left:197px;top:672px;width:103px;height:1px;background:#a3a1a5;"></div>
<div class="a" style="left:301px;top:671px;width:770px;height:1px;background:#a3a1a5;"></div>
<svg style="left:208px;top:681px" width="14" height="8" viewBox="0 0 14 8"><rect x="1" y="0" width="12" height="3.5" fill="#d2d2d2"/><rect x="0.5" y="3.5" width="13" height="4" fill="#3c3c3c"/><rect x="9.5" y="4.5" width="2.5" height="2" fill="#30b030"/></svg>
<div class="t " style="left:224.7px;top:682px;font-size:12px;font-weight:bold;transform:scaleX(0.9295);">Disk 3</div>
<div class="t " style="left:206.5px;top:697px;font-size:12px;transform:scaleX(0.9581);">Dynamic</div>
<div class="t " style="left:206.5px;top:712px;font-size:12px;transform:scaleX(0.8816);">39.88 GB</div>
<div class="t " style="left:206.5px;top:727px;font-size:12px;transform:scaleX(0.9584);">Online</div>
<div class="a" style="left:302px;top:679px;width:235px;height:13px;background:#00ffff;"></div>
<div class="a" style="left:305px;top:695px;width:229px;height:68px;background:#fff;border-top:1px solid #a3a1a5;border-left:1px solid #a3a1a5"></div>
<div class="t " style="left:309.3px;top:700px;font-size:12px;font-weight:bold;transform:scaleX(0.9775);">New Volume  (S:)</div>
<div class="t " style="left:309.3px;top:715px;font-size:12px;transform:scaleX(0.8816);">4.88 GB NTFS</div>
<div class="t " style="left:309.3px;top:730px;font-size:12px;transform:scaleX(0.9584);">Healthy</div>
<div class="a" style="left:538px;top:678px;width:1px;height:88px;background:#a3a1a5;"></div>
<div class="a" style="left:540px;top:679px;width:235px;height:13px;background:#800000;"></div>
<div class="a" style="left:543px;top:695px;width:229px;height:68px;background:#fff;border-top:1px solid #a3a1a5;border-left:1px solid #a3a1a5"></div>
<div class="t " style="left:547.3px;top:700px;font-size:12px;font-weight:bold;transform:scaleX(0.9774);">New Volume  (M:)</div>
<div class="t " style="left:547.3px;top:715px;font-size:12px;transform:scaleX(0.8816);">4.88 GB NTFS</div>
<div class="t " style="left:547.3px;top:730px;font-size:12px;transform:scaleX(0.9584);">Healthy</div>
<div class="a" style="left:776px;top:678px;width:1px;height:88px;background:#a3a1a5;"></div>
<div class="a" style="left:778px;top:679px;width:288px;height:13px;background:#000000;"></div>
<div class="a" style="left:777px;top:692px;width:290px;height:74px;background:#c3c3c3;"></div>
<svg style="left:781px;top:696px" width="283" height="67" viewBox="0 0 283 67"><defs><pattern id="hp" width="8" height="8" patternUnits="userSpaceOnUse"><path d="M-2 10 L10 -2" stroke="#9c9c9c" stroke-width="0.8"/></pattern></defs><rect width="283" height="67" fill="#fff"/><rect width="283" height="67" fill="url(#hp)"/></svg>
<div class="t " style="left:785.3px;top:715px;font-size:12px;transform:scaleX(0.8816);">30.11 GB</div>
<div class="t " style="left:785.3px;top:730px;font-size:12px;transform:scaleX(0.9584);">Unallocated</div>
<div class="a" style="left:1067px;top:678px;width:1px;height:88px;background:#a3a1a5;"></div>
<div class="a" style="left:301px;top:766px;width:766px;height:1px;background:#a3a1a5;"></div>
<div class="a" style="left:197px;top:771px;width:103px;height:1px;background:#a3a1a5;"></div>
<div class="a" style="left:301px;top:770px;width:770px;height:1px;background:#a3a1a5;"></div>
<svg style="left:208px;top:780px" width="14" height="8" viewBox="0 0 14 8"><rect x="1" y="0" width="12" height="3.5" fill="#d2d2d2"/><rect x="0.5" y="3.5" width="13" height="4" fill="#3c3c3c"/><rect x="9.5" y="4.5" width="2.5" height="2" fill="#30b030"/></svg>
<div class="t " style="left:224.7px;top:781px;font-size:12px;font-weight:bold;transform:scaleX(0.9295);">Disk 4</div>
<div class="t " style="left:206.5px;top:796px;font-size:12px;transform:scaleX(0.9581);">Dynamic</div>
<div class="t " style="left:206.5px;top:811px;font-size:12px;transform:scaleX(0.8816);">39.88 GB</div>
<div class="t " style="left:206.5px;top:826px;font-size:12px;transform:scaleX(0.9584);">Online</div>
<div class="a" style="left:302px;top:778px;width:340px;height:13px;background:#00ffff;"></div>
<div class="a" style="left:305px;top:794px;width:334px;height:68px;background:#fff;border-top:1px solid #a3a1a5;border-left:1px solid #a3a1a5"></div>
<div class="t " style="left:309.3px;top:799px;font-size:12px;font-weight:bold;transform:scaleX(0.9775);">New Volume  (S:)</div>
<div class="t " style="left:309.3px;top:814px;font-size:12px;transform:scaleX(0.8816);">4.88 GB NTFS</div>
<div class="t " style="left:309.3px;top:829px;font-size:12px;transform:scaleX(0.9584);">Healthy</div>
<div class="a" style="left:643px;top:777px;width:1px;height:88px;background:#a3a1a5;"></div>
<div class="a" style="left:645px;top:778px;width:421px;height:13px;background:#000000;"></div>
<div class="a" style="left:648px;top:794px;width:415px;height:68px;background:#fff;border-top:1px solid #a3a1a5;border-left:1px solid #a3a1a5"></div>
<div class="t " style="left:652.3px;top:814px;font-size:12px;transform:scaleX(0.8816);">34.99 GB</div>
<div class="t " style="left:652.3px;top:829px;font-size:12px;transform:scaleX(0.9584);">Unallocated</div>
<div class="a" style="left:1067px;top:777px;width:1px;height:88px;background:#a3a1a5;"></div>
<div class="a" style="left:301px;top:865px;width:766px;height:1px;background:#a3a1a5;"></div>
<div class="a" style="left:197px;top:870px;width:103px;height:1px;background:#a3a1a5;"></div>
<div class="a" style="left:301px;top:869px;width:770px;height:1px;background:#a3a1a5;"></div>
<svg style="left:208px;top:875px" width="15" height="16" viewBox="0 0 15 16"><g transform="scale(1.05)"><rect x="1" y="7.5" width="12" height="4" fill="#d2d2d2"/><circle cx="9" cy="5" r="4.7" fill="#dcdcdc" stroke="#a0a0a0" stroke-width="0.9"/><circle cx="9" cy="5" r="1.7" fill="#fff" stroke="#8a8a8a" stroke-width="0.7"/><rect x="0.5" y="11.3" width="13" height="3.4" fill="#2e2e2e"/><rect x="9.5" y="12" width="2.5" height="2" fill="#30b030"/></g></svg>
<div class="t " style="left:224.7px;top:880px;font-size:12px;font-weight:bold;transform:scaleX(0.9294);">CD-ROM 0</div>
<div class="t " style="left:206.5px;top:895px;font-size:12px;transform:scaleX(0.9581);">DVD</div>
<div class="t " style="left:206.5px;top:910px;font-size:12px;transform:scaleX(0.8816);">3.67 GB</div>
<div class="t " style="left:206.5px;top:925px;font-size:12px;transform:scaleX(0.9584);">Online</div>
<div class="a" style="left:302px;top:877px;width:591px;height:13px;background:#000080;"></div>
<div class="a" style="left:305px;top:893px;width:585px;height:68px;background:#fff;border-top:1px solid #a3a1a5;border-left:1px solid #a3a1a5"></div>
<div class="t " style="left:309.3px;top:898px;font-size:12px;font-weight:bold;transform:scaleX(0.9775);">J_CENA_X64FREV_EN-US_DV5  (X:)</div>
<div class="t " style="left:309.3px;top:913px;font-size:12px;transform:scaleX(0.8816);">3.67 GB UDF</div>
<div class="t " style="left:309.3px;top:928px;font-size:12px;transform:scaleX(0.9950);">Healthy (Primary Partition)</div>
<div class="a" style="left:894px;top:876px;width:1px;height:88px;background:#a3a1a5;"></div>
<div class="a" style="left:301px;top:964px;width:593px;height:1px;background:#a3a1a5;"></div>
</div>
<div class="a" style="left:197px;top:914px;width:889px;height:19px;background:#f3f1f4;"></div>
<div class="a" style="left:197px;top:913px;width:889px;height:1px;background:#fbfafc;"></div>
<div class="a" style="left:202px;top:918px;width:11px;height:12px;background:#000000;"></div>
<div class="t " style="left:218.5px;top:918px;font-size:12px;transform:scaleX(0.9625);">Unallocated</div>
<div class="a" style="left:286px;top:918px;width:11px;height:12px;background:#000080;"></div>
<div class="t " style="left:302.5px;top:918px;font-size:12px;transform:scaleX(0.9959);">Primary partition</div>
<div class="a" style="left:396px;top:918px;width:11px;height:12px;background:#800000;"></div>
<div class="t " style="left:412.5px;top:918px;font-size:12px;transform:scaleX(1.0207);">Mirrored volume</div>
<div class="a" style="left:507px;top:918px;width:11px;height:12px;background:#00ffff;"></div>
<div class="t " style="left:523.5px;top:918px;font-size:12px;transform:scaleX(0.9771);">RAID-5 volume</div>
<div class="a" style="left:1094px;top:116px;width:186px;height:20px;background:#f7f6f8;"></div>
<div class="a" style="left:1094px;top:136px;width:186px;height:1px;background:#a4a4a4;"></div>
<div class="t " style="left:1099.5px;top:121px;font-size:12px;font-weight:bold;transform:scaleX(0.9088);">Actions</div>
<div class="a" style="left:1094px;top:137px;width:186px;height:26px;background:linear-gradient(#c0d6ee,#a6c0df);"></div>
<div class="t " style="left:1101.5px;top:145px;font-size:12px;color:#0f1f38;transform:scaleX(0.9719);">Disk Management</div>
<svg style="left:1264px;top:148px" width="9" height="5" viewBox="0 0 9 5"><path d="M0 5.3 L4.5 0.3 L9 5.3Z" fill="#000"/></svg>
<div class="t " style="left:1125.8px;top:169px;font-size:12px;transform:scaleX(1.0090);">More Actions</div>
<svg style="left:1267px;top:170px" width="5" height="9" viewBox="0 0 5 9"><path d="M0 0 L5 4.5 L0 9Z" fill="#000"/></svg>
<div class="a" style="left:1px;top:936px;width:1281px;height:23px;background:#f1eff3;"></div>
<div class="a" style="left:1061px;top:937px;width:1px;height:21px;background:#d8d6da;"></div>
<div class="a" style="left:1194px;top:937px;width:1px;height:21px;background:#d8d6da;"></div>
<div class="a" style="left:1279px;top:937px;width:1px;height:21px;background:#d8d6da;"></div>
<div class="a" style="left:2px;top:959px;width:1280px;height:40px;background:#0b1119;"></div>
<div class="a" style="left:1282px;top:936px;width:4px;height:67px;background:#e9e7eb;"></div>
<div class="a" style="left:0px;top:999px;width:1286px;height:4px;background:#e9e7eb;"></div>
<svg style="left:18px;top:971px" width="16" height="16" viewBox="0 0 16 16"><path d="M0 2.2 L6.7 1.2 L6.7 7.6 L0 7.6Z M7.7 1.05 L16 0 L16 7.6 L7.7 7.6Z M0 8.5 L6.7 8.5 L6.7 14.9 L0 14.1Z M7.7 8.5 L16 8.5 L16 16.3 L7.7 15.1Z" fill="#fff"/></svg>
<svg style="left:66px;top:970px" width="17" height="18" viewBox="0 0 17 18"><circle cx="10.5" cy="6.5" r="5.3" fill="none" stroke="#fff" stroke-width="1.3"/><path d="M6.8 10.3 L0.8 16.5" stroke="#fff" stroke-width="1.4"/></svg>
<svg style="left:112px;top:972px" width="21" height="14" viewBox="0 0 21 14"><rect x="4.5" y="0.5" width="12" height="13" fill="none" stroke="#fff" stroke-width="1.2"/><path d="M2.5 2.5 H0.6 V11.5 H2.5 M18.5 2.5 H20.4 V11.5 H18.5" fill="none" stroke="#fff" stroke-width="1.2"/></svg>
<svg style="left:161px;top:966px" width="24" height="24" viewBox="0 0 24 24"><g transform="scale(1.0)">
<circle cx="13.2" cy="13.5" r="9.4" fill="#42b6ee"/>
<path d="M8.4 11.2 C9 8.4 11 7 12.8 7 C14.6 7 16.6 8.4 17.1 11.2 Z" fill="#0b1119"/>
<path d="M8.1 14.4 H24 V17.2 H18.6 C17.4 19.2 15.2 19.7 13 19.7 C10.4 19.7 8.4 17.6 8.1 14.4 Z" fill="#0b1119"/>
<path d="M3.6 22.6 C-0.5 18.5 6 6.5 17.5 2.6 C21.5 1.2 23.8 1.8 22.3 5.3" fill="none" stroke="#e9c54a" stroke-width="1.9" stroke-linecap="round"/>
</g></svg>
<svg style="left:211px;top:970px" width="21" height="18" viewBox="0 0 21 18"><path d="M0 1 L8 1 L9 2.5 L21 2.5 L21 17.5 L0 17.5Z" fill="#f8d77a"/><rect x="0" y="3.5" width="21" height="14" fill="#fbe08c"/><path d="M4.3 17.5 V11.2 Q4.3 9.8 5.7 9.8 H15.5 Q17 9.8 17 11.2 V17.5 H12.5 V13.5 H8.5 V17.5Z" fill="#3aa6dc"/><rect x="8.5" y="13.5" width="4" height="4" fill="#f4d48a"/></svg>
<svg style="left:258px;top:966px" width="27" height="26" viewBox="0 0 27 26"><rect x="1.5" y="1.5" width="11" height="21" fill="#2a8ad8" stroke="#bfe4fb" stroke-width="1"/><rect x="1.5" y="6" width="11" height="1" fill="#bfe4fb"/><rect x="9.5" y="11" width="9" height="3" rx="0.8" fill="#0b1119" stroke="#cfdbe6" stroke-width="1"/><rect x="5" y="14.3" width="20.5" height="10.5" rx="1.2" fill="#8a9aaa" stroke="#e4eef6" stroke-width="1.1"/><path d="M8 18 H22.5" stroke="#e4eef6" stroke-width="0.9"/><circle cx="8.3" cy="18" r="0.9" fill="#e4eef6"/><circle cx="22.2" cy="18" r="0.9" fill="#e4eef6"/></svg>
<div class="a" style="left:251px;top:997px;width:40px;height:2px;background:#a4c6dc;"></div>
<div class="a" style="left:296px;top:959px;width:48px;height:40px;background:#393d40;"></div>
<div class="a" style="left:296px;top:997px;width:48px;height:2px;background:#a4c6dc;"></div>
<svg style="left:306px;top:966px" width="26" height="26" viewBox="0 0 26 26"><defs><linearGradient id="scr2" x1="0" y1="0" x2="1" y2="0.6"><stop offset="0" stop-color="#000a80"/><stop offset="0.5" stop-color="#1a30d0"/><stop offset="1" stop-color="#d8e0ff"/></linearGradient></defs><path d="M3 13 L8 11 L8 8 L12 7 L12 14Z" fill="#c8ccc8"/><path d="M2 13.5 L18 14.5 L21 16 L20 23 L5 24 L2 21Z" fill="#d4d8d4"/><path d="M2 13.5 L18 14.5 L20.5 16 L4 16Z" fill="#eef0ee"/><rect x="6" y="18.5" width="2" height="2" fill="#8a908a"/><rect x="11" y="19" width="2.5" height="1.5" fill="#f4f4f4"/><path d="M9.5 1.3 L24.5 2.3 L24 15.5 L9.5 14Z" fill="#e4e8fa"/><path d="M11 3 L23 3.8 L22.7 13.7 L11 12.6Z" fill="url(#scr2)"/></svg>
<svg style="left:1221px;top:973px" width="17" height="13" viewBox="0 0 17 13"><rect x="4.5" y="0.5" width="12" height="9" fill="none" stroke="#fff" stroke-width="1.1"/><path d="M10.5 9.5 V12 M7.5 12.5 H13.5" stroke="#fff" stroke-width="1.1"/><rect x="0.5" y="0.5" width="5" height="4" fill="#0b1119" stroke="#fff" stroke-width="1"/><path d="M1.5 1.5 L3 3 L4.5 1.5" stroke="#fff" stroke-width="0.7" fill="none"/><path d="M2 4.5 V12.5" stroke="#fff" stroke-width="1.1"/></svg>
<div class="t " style="left:1247.5px;top:973px;font-size:12px;color:#fff;transform:scaleX(0.8649);">ENG</div>
<div class="a" style="left:1277px;top:959px;width:1px;height:40px;background:#3a3f48;"></div>
<div class="a" style="left:220px;top:132px;width:499px;height:409px;background:#f2eff3;border:1px solid #4f86ad"></div>
<div class="a" style="left:221px;top:133px;width:497px;height:88px;background:#fff;"></div>
<div class="a" style="left:221px;top:221px;width:496px;height:1px;background:#a0a0a0;"></div>
<div class="t " style="left:229.6px;top:142px;font-size:12px;transform:scaleX(0.9840);">New Striped Volume</div>
<svg style="left:698px;top:142px" width="10" height="10" viewBox="0 0 10 10"><path d="M0.4 0.4 L9.6 9.6 M9.6 0.4 L0.4 9.6" stroke="#000" stroke-width="1.1"/></svg>
<div class="t " style="left:243.6px;top:174px;font-size:12px;font-weight:bold;transform:scaleX(0.9969);">Select Disks</div>
<div class="t " style="left:265.5px;top:190px;font-size:10.5px;transform:scaleX(1.0115);">You can select the disks and set the disk size for this volume.</div>
<div class="t " style="left:264.3px;top:236px;font-size:10.5px;transform:scaleX(1.0234);">Select the disks you want to use, and then click Add.</div>
<div class="t " style="left:264.3px;top:278px;font-size:10.5px;">A<span class="u">v</span>ailable:</div>
<div class="t " style="left:532.1px;top:278px;font-size:10.5px;"><span class="u">S</span>elected:</div>
<div class="a" style="left:264px;top:294px;width:144px;height:96px;background:#fff;border:1px solid #828790"></div>
<div class="a" style="left:266px;top:296px;width:140px;height:16px;background:#0078d7;"></div>
<div class="t " style="left:266.9px;top:298px;font-size:10.5px;color:#fff;transform:scaleX(0.9795);">Disk 1</div>
<div class="t " style="left:314.3px;top:298px;font-size:10.5px;color:#fff;transform:scaleX(1.0026);">30829 MB</div>
<div class="a" style="left:532px;top:294px;width:144px;height:96px;background:#fff;border:1px solid #828790"></div>
<div class="a" style="left:534px;top:296px;width:140px;height:16px;background:#0078d7;"></div>
<div class="t " style="left:534.7px;top:298px;font-size:10.5px;color:#fff;transform:scaleX(0.9795);">Disk 3</div>
<div class="t " style="left:582.7px;top:298px;font-size:10.5px;color:#fff;transform:scaleX(1.0026);">30829 MB</div>
<div class="t " style="left:534.7px;top:314px;font-size:10.5px;transform:scaleX(0.9795);">Disk 4</div>
<div class="t " style="left:582.7px;top:314px;font-size:10.5px;transform:scaleX(1.0026);">30829 MB</div>
<div class="a" style="left:422px;top:300px;width:93px;height:21px;background:#e1e1e1;border:1px solid #adadad"></div>
<div class="t " style="left:454.63384765625px;top:306px;font-size:10.5px;"><span class="u">A</span>dd &gt;</div>
<div class="a" style="left:422px;top:329px;width:93px;height:21px;background:#e1e1e1;border:1px solid #adadad"></div>
<div class="t " style="left:444.42587890625px;top:335px;font-size:10.5px;">&lt; <span class="u">R</span>emove</div>
<div class="a" style="left:422px;top:358px;width:93px;height:21px;background:#e1e1e1;border:1px solid #adadad"></div>
<div class="t " style="left:437.42205078125px;top:364px;font-size:10.5px;">&lt; Re<span class="u">m</span>ove All</div>
<div class="t " style="left:262.5px;top:408px;font-size:10.5px;transform:scaleX(0.9955);">Total volume size in megabytes (MB):</div>
<div class="t " style="left:262.5px;top:432px;font-size:10.5px;transform:scaleX(0.9949);">Maximum available space in MB:</div>
<div class="t " style="left:262.5px;top:455px;font-size:10.5px;transform:scaleX(1.0079);">S<span class="u">e</span>lect the amount of space in MB:</div>
<div class="a" style="left:532px;top:406px;width:143px;height:15px;background:transparent;border-top:1px solid #a0a0a0;border-left:1px solid #a0a0a0"></div>
<div class="a" style="left:532px;top:421px;width:143px;height:1px;background:#fafafa;"></div>
<div class="t " style="left:533.5px;top:409px;font-size:10.5px;transform:scaleX(0.9599);">61658</div>
<div class="a" style="left:532px;top:429px;width:143px;height:15px;background:transparent;border-top:1px solid #a0a0a0;border-left:1px solid #a0a0a0"></div>
<div class="t " style="left:533.5px;top:432px;font-size:10.5px;transform:scaleX(0.9599);">35829</div>
<div class="a" style="left:532px;top:450px;width:144px;height:23px;background:#fff;border:1px solid #7a7a7a;border-right-color:#bdbdbd;border-bottom-color:#bdbdbd"></div>
<div class="t " style="left:535.6px;top:455px;font-size:10.5px;transform:scaleX(0.9599);">30829</div>
<div class="a" style="left:659px;top:452px;width:15px;height:9px;background:#e6e6e6;border:1px solid #c4c4c4"></div>
<div class="a" style="left:659px;top:462px;width:15px;height:9px;background:#e6e6e6;border:1px solid #c4c4c4"></div>
<svg style="left:663px;top:454px" width="7" height="4" viewBox="0 0 7 4"><path d="M0 4 L3.5 0 L7 4Z" fill="#000"/></svg>
<svg style="left:663px;top:465px" width="7" height="4" viewBox="0 0 7 4"><path d="M0 0 L3.5 4 L7 0Z" fill="#000"/></svg>
<div class="a" style="left:221px;top:493px;width:496px;height:1px;background:#a0a0a0;"></div>
<div class="a" style="left:475px;top:508px;width:72px;height:21px;background:#e1e1e1;border:1px solid #adadad"></div>
<div class="t " style="left:494.80375px;top:514px;font-size:10.5px;">&lt; <span class="u">B</span>ack</div>
<div class="a" style="left:549px;top:508px;width:73px;height:21px;background:#e1e1e1;border:2px solid #0078d7"></div>
<div class="a" style="left:552px;top:511px;width:67px;height:15px;background:transparent;border:1px dotted #000"></div>
<div class="t " style="left:570.1806640625px;top:514px;font-size:10.5px;"><span class="u">N</span>ext &gt;</div>
<div class="a" style="left:634px;top:508px;width:73px;height:21px;background:#e1e1e1;border:1px solid #adadad"></div>
<div class="t " style="left:654.15732421875px;top:514px;font-size:10.5px;">Cancel</div>
<div class="a" style="left:1285px;top:37px;width:1px;height:966px;background:#7d7d7d;"></div>
</body></html>
